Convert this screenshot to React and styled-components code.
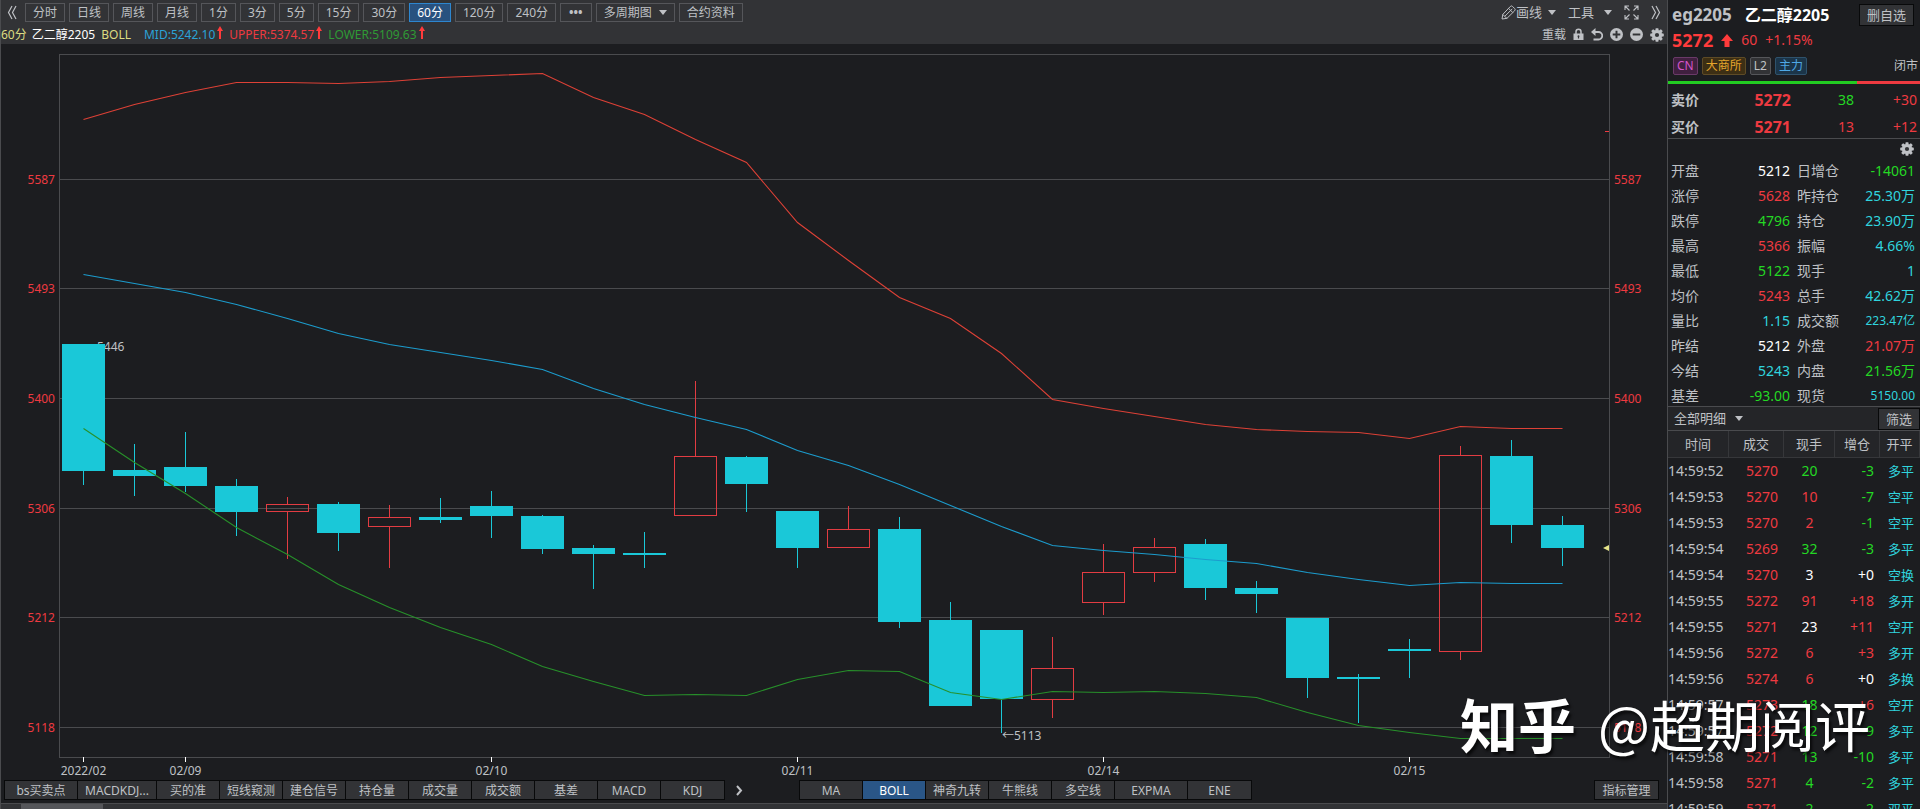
import React from 'react';
import styled, { createGlobalStyle } from 'styled-components';

const color = {
  bg: '#1c1d20',
  bar: '#323336',
  line: '#4a4b4e',
  text: '#bfc1c5',
  white: '#ffffff',
  red: '#ee3a40',
  green: '#24d824',
  cyan: '#30d4de',
  candle: '#1ac8d8',
};

const GlobalStyle = createGlobalStyle`
  * {
    box-sizing: border-box;
  }
  body {
    margin: 0;
    overflow: hidden;
    background: ${color.bg};
    color: ${color.text};
    font-family: 'Noto Sans', 'Noto Sans CJK SC', sans-serif;
    font-size: 14px;
  }
  button,
  select {
    font-family: inherit;
    color: inherit;
  }
`;

const Page = styled.div`
  position: relative;
  display: flex;
  height: 100vh;
  overflow: hidden;
`;

/* ---------- left side: chart ---------- */

const Main = styled.main`
  flex: 1;
  min-width: 0;
  display: flex;
  flex-direction: column;
  border-left: 1px solid ${color.line};
`;

const Toolbar = styled.header`
  background: ${color.bar};
  font-size: 12px;
  line-height: 17px;
`;

const PeriodRow = styled.div`
  display: flex;
  align-items: center;
  justify-content: space-between;
  height: 25px;
  padding: 0 6px;
`;

const InfoRow = styled.div`
  display: flex;
  align-items: center;
  justify-content: space-between;
  height: 19px;
  padding-right: 3px;
`;

const Group = styled.div`
  display: flex;
  align-items: center;
  gap: ${props => props.$gap || 4}px;
`;

const PeriodButton = styled.button`
  height: 19px;
  padding: 0 7px;
  border: 1px solid ${props => (props.$active ? '#2d86cf' : '#55565a')};
  background: ${props => (props.$active ? '#29527f' : 'transparent')};
  color: ${props => (props.$active ? color.white : color.text)};
  font-size: 12px;
  line-height: 17px;
  white-space: nowrap;
`;

const MoreButton = styled(PeriodButton)`
  padding: 0 8px;
  font-weight: 700;
`;

const SelectWrap = styled.label`
  display: flex;
  align-items: center;
  height: ${props => (props.$framed ? 19 : 22)}px;
  padding: 0 ${props => (props.$framed ? 7 : 5)}px;
  border: 1px solid ${props => (props.$framed ? '#55565a' : 'transparent')};
`;

const Select = styled.select`
  appearance: none;
  padding: 0;
  border: 0;
  outline: 0;
  background: transparent;
  font-size: ${props => props.$size || 12}px;
  line-height: 17px;
`;

const Caret = styled.span`
  width: 0;
  height: 0;
  margin-left: ${props => props.$gap || 8}px;
  border: 4px solid transparent;
  border-top: 5px solid ${color.text};
  border-bottom: 0;
`;

const IconButton = styled.button`
  display: flex;
  align-items: center;
  padding: 0;
  border: 0;
  background: none;
  font-size: ${props => props.$size || 12}px;
  line-height: 17px;
  white-space: nowrap;
`;

const Boll = styled.p`
  display: flex;
  margin: 0;
  white-space: pre;
`;

const Tint = styled.span`
  color: ${props => props.$color};
  margin-right: ${props => props.$gap || 0}px;
`;

const ChartSvg = styled.svg`
  display: block;
  flex: 1;
  min-height: 0;
  width: 100%;
  font-size: 12px;
`;

const TabBar = styled.footer`
  display: flex;
  align-items: center;
  height: 20px;
  margin-bottom: 3px;
  padding: 0 8px 0 3px;
`;

const Tabs = styled.div`
  display: flex;
  border: 1px solid #08090a;
`;

const Tab = styled.button`
  width: ${props => props.$width || 63}px;
  height: 18px;
  padding: 0;
  border: 0;
  border-right: 1px solid #08090a;
  background: ${props => (props.$active ? '#2a5687' : color.bar)};
  color: ${props => (props.$active ? color.white : color.text)};
  font-size: 12px;
  line-height: 17px;
  white-space: nowrap;
  &:last-child {
    border-right: 0;
  }
`;

const NextButton = styled(IconButton)`
  justify-content: center;
  width: 28px;
  margin-right: 46px;
`;

const Spacer = styled.div`
  flex: 1;
`;

const ScrollStrip = styled.div`
  height: 6px;
  padding-left: 20px;
  border-top: 1px solid ${color.line};
  background: ${color.bar};
`;

const Thumb = styled.div`
  width: 82px;
  height: 5px;
  background: #55565a;
`;

/* ---------- right side: quote panel ---------- */

const Aside = styled.aside`
  width: 253px;
  flex: none;
  border-left: 1px solid ${color.line};
  overflow: hidden;
  line-height: 20px;
`;

const TitleRow = styled.div`
  display: flex;
  align-items: center;
  height: 30px;
  padding: 0 6px 0 4px;
  font-weight: 700;
`;

const Code = styled.span`
  font-size: 17px;
  margin-right: 13px;
`;

const Name = styled.span`
  flex: 1;
  color: ${color.white};
  font-size: 16px;
`;

const PanelButton = styled.button`
  height: 22px;
  padding: 0 7px;
  border: 1px solid #08090a;
  background: ${color.bar};
  font-size: 13px;
  line-height: 18px;
`;

const PriceRow = styled.div`
  display: flex;
  align-items: center;
  gap: 8px;
  height: 20px;
  padding-left: 4px;
  color: ${color.red};
`;

const LastPrice = styled.strong`
  font-size: 18px;
  color: #ff3b3b;
`;

const TagRow = styled.div`
  display: flex;
  align-items: center;
  gap: 4px;
  height: 31px;
  padding: 0 2px 0 5px;
  font-size: 12px;
`;

const Tag = styled.span`
  height: 18px;
  padding: 0 3px;
  border: 1px solid ${props => props.$border};
  border-radius: 2px;
  background: ${props => props.$bg};
  color: ${props => props.$color};
  line-height: 16px;
`;

const Status = styled.span`
  margin-left: auto;
`;

const Ratio = styled.div`
  height: 3px;
  background: linear-gradient(to right, #22cc22 75%, ${color.red} 75%);
`;

const Offers = styled.div`
  display: grid;
  grid-template-columns: 50px 70px 63px 1fr;
  grid-auto-rows: 22px;
  row-gap: 5px;
  padding: 5px 3px 0 3px;
  border-bottom: 1px solid ${color.line};
  text-align: right;
  line-height: 22px;
`;

const OfferLabel = styled.strong`
  text-align: left;
`;

const OfferPrice = styled.strong`
  color: ${color.red};
  font-size: 16px;
`;

const GearRow = styled.div`
  display: flex;
  justify-content: flex-end;
  align-items: center;
  height: 20px;
  padding-right: 6px;
`;

const Stats = styled.dl`
  display: grid;
  grid-template-columns: 119px 1fr;
  column-gap: 7px;
  row-gap: 5px;
  margin: 0;
  padding: 2px 5px 0 3px;
  border-bottom: 1px solid ${color.line};
`;

const Stat = styled.div`
  display: flex;
  justify-content: space-between;
  height: 20px;
`;

const StatValue = styled.dd`
  margin: 0;
  color: ${props => props.$color};
  font-size: ${props => (props.$small ? 12 : 14)}px;
`;

const FilterRow = styled.div`
  display: flex;
  align-items: center;
  justify-content: space-between;
  height: 24px;
  border-bottom: 1px solid ${color.line};
  background: #242528;
`;

const Ticks = styled.table`
  width: 100%;
  table-layout: fixed;
  border-collapse: separate;
  border-spacing: 0;
`;

const Th = styled.th`
  width: ${props => props.$width}px;
  height: 27px;
  padding: 0;
  border-right: 1px solid #36373a;
  border-bottom: 1px solid #36373a;
  background: #242528;
  font-size: 13px;
  font-weight: 400;
`;

const Td = styled.td`
  height: 26px;
  padding: 0 ${props => props.$pad || 0}px 0 0;
  color: ${props => props.$color || color.text};
  text-align: ${props => props.$align || 'right'};
  font-size: ${props => props.$size || 14}px;
  white-space: nowrap;
`;

const Watermark = styled.div`
  position: absolute;
  right: 50px;
  bottom: 46px;
  display: flex;
  align-items: center;
  gap: 22px;
  color: ${color.white};
  font-family: 'Noto Sans CJK SC', sans-serif;
  font-size: 55px;
  line-height: 80px;
  text-shadow: 2px 3px 3px rgba(0, 0, 0, 0.7);
  pointer-events: none;
`;

const Brand = styled.span`
  font-size: 58px;
  font-weight: 700;
`;

/* ---------- icons ---------- */

const Gear = () => (
  <svg width="14" height="14" viewBox="-7 -7 14 14" fill={color.text}>
    {[0, 45, 90, 135].map(a => (
      <path key={a} d="M-1.3 -6.8h2.6l.6 3v7.6l-.6 3h-2.6l-.6 -3v-7.6z" transform={`rotate(${a})`} />
    ))}
    <circle r="4.8" />
    <circle r="2.1" fill={color.bar} />
  </svg>
);

const DoubleAngle = ({ flip }) => (
  <svg width="10" height="15" viewBox="0 0 10 15" fill="none" stroke={color.text} strokeWidth="1.2">
    <path d={flip ? 'M1 1l3.5 6.5L1 14M5 1l3.5 6.5L5 14' : 'M5 1L1.5 7.5L5 14M9 1L5.5 7.5L9 14'} />
  </svg>
);

const Pencil = () => (
  <svg width="15" height="15" viewBox="0 0 15 15" fill="none" stroke={color.text} strokeWidth="1">
    <path d="M1 14l.8-4.600L9.300 1.500a1.600 1.600 0 0 1 2.300 0l2 2a1.600 1.600 0 0 1 0 2.300L6 13.300z" />
    <path d="M1.800 9.400l4 4M3.800 11.300L11.300 3.800M7.500 3.300l4.300 4.300" />
  </svg>
);

const Expand = () => (
  <svg width="15" height="15" viewBox="0 0 15 15" fill="none" stroke={color.text} strokeWidth="1.1">
    <path d="M1 5V1h4M1 1l4.500 4.500M10 1h4v4M14 1L9.500 5.500M1 10v4h4M1 14l4.500-4.500M14 10v4h-4M14 14L9.500 9.500" />
  </svg>
);

const Lock = () => (
  <svg width="11" height="13" viewBox="0 0 11 13">
    <path d="M3 6V3.800a2.500 2.500 0 0 1 5 0V6" fill="none" stroke={color.text} strokeWidth="1.500" />
    <path d="M.5 5.500h10v6.500H.5V5.500zM5.500 7.300a1 1 0 0 0-.6 1.800v1.400h1.200V9.100a1 1 0 0 0-.6-1.800z" fill={color.text} fillRule="evenodd" />
  </svg>
);

const Undo = () => (
  <svg width="12" height="13" viewBox="0 0 12 13">
    <path d="M2 4h5.500a3.500 3.500 0 0 1 0 7.500H2.500" fill="none" stroke={color.text} strokeWidth="1.800" />
    <path d="M0 4L4.500 0v8z" fill={color.text} />
  </svg>
);

const Zoom = ({ plus }) => (
  <svg width="13" height="13" viewBox="0 0 12 12">
    <circle cx="6" cy="6" r="6" fill={color.text} />
    <path d={plus ? 'M2.500 6h7M6 2.500v7' : 'M2.500 6h7'} stroke={color.bar} strokeWidth="1.800" />
  </svg>
);

const UpArrow = ({ width, height }) => (
  <svg width={width} height={height} viewBox="0 0 12 12" preserveAspectRatio="none" fill="#ff3b3b">
    <path d="M6 0l6 6.500H8.500V12h-5V6.500H0z" />
  </svg>
);

const SmallArrow = () => (
  <svg width="6" height="13" viewBox="0 0 6 13" fill="#ff3b3b">
    <path d="M3 0l3 5H4v8H2V5H0z" />
  </svg>
);

const Next = () => (
  <svg width="7" height="11" viewBox="0 0 7 11" fill="none" stroke={color.text} strokeWidth="2">
    <path d="M1 1l4 4.500L1 10" />
  </svg>
);

/* ---------- chart data ---------- */

const STEP = 51;
const FIRST = 83.5;

const gridLines = [
  [5587, 179],
  [5493, 288],
  [5400, 398],
  [5306, 508],
  [5212, 617],
  [5118, 727],
];

const dates = [
  [0, '2022/02'],
  [2, '02/09'],
  [8, '02/10'],
  [14, '02/11'],
  [20, '02/14'],
  [26, '02/15'],
];

// [high, body top, body bottom, low, rising]
const candles = [
  [344, 344, 471, 485],
  [444, 470, 476, 496],
  [432, 467, 486, 492],
  [479, 486, 512, 536],
  [497, 504, 511, 559, true],
  [502, 504, 533, 551],
  [505, 517, 526, 568, true],
  [498, 517, 520, 523],
  [491, 506, 516, 538],
  [515, 516, 549, 554],
  [545, 548, 554, 589],
  [532, 553, 555, 568],
  [381, 456, 515, 515, true],
  [456, 457, 484, 512],
  [511, 511, 548, 568],
  [506, 529, 547, 547, true],
  [517, 529, 622, 628],
  [602, 620, 706, 706],
  [630, 630, 699, 733],
  [637, 668, 699, 718, true],
  [544, 572, 602, 615, true],
  [538, 547, 572, 582, true],
  [539, 544, 588, 600],
  [581, 588, 594, 613],
  [618, 618, 678, 698],
  [674, 677, 679, 723],
  [639, 649, 651, 678],
  [446, 455, 651, 660, true],
  [440, 456, 525, 543],
  [516, 525, 548, 566],
];

const bands = [
  {
    stroke: '#dd4136',
    ys: [119, 104, 92, 82, 82, 83, 81, 77, 75, 73, 97, 114, 139, 162, 222, 260, 297, 318, 353, 399, 408, 416, 424, 429, 431, 432, 438, 426, 428, 428],
  },
  {
    stroke: '#1c9ccd',
    ys: [274, 283, 292, 304, 318, 333, 344, 352, 360, 369, 388, 404, 417, 429, 450, 465, 484, 505, 526, 545, 550, 554, 559, 563, 572, 579, 585, 582, 583, 583],
  },
  {
    stroke: '#27902a',
    ys: [428, 462, 493, 527, 554, 584, 607, 627, 644, 666, 681, 695, 694, 695, 679, 670, 671, 692, 699, 691, 692, 691, 693, 697, 712, 725, 732, 738, 738, 738],
  },
];

const Candle = ({ index, data }) => {
  const [high, top, bottom, low, rising] = data;
  const x = FIRST + index * STEP;
  if (rising) {
    return (
      <g stroke="#e23c42" fill="none">
        <path d={`M${x} ${high}V${top}M${x} ${bottom}V${low}`} />
        <rect x={x - 21} y={top + 0.5} width="42" height={bottom - top} />
      </g>
    );
  }
  return (
    <g fill={color.candle}>
      <rect x={x - 0.5} y={high} width="1" height={low - high} />
      <rect x={x - 21.5} y={top} width="43" height={bottom - top} />
    </g>
  );
};

const Chart = () => (
  <ChartSvg viewBox="1 44 1666 736" role="img" aria-label="BOLL">
    <g stroke={color.line} fill="none" shapeRendering="crispEdges">
      <rect x="59.5" y="54.5" width="1550" height="703" />
      {gridLines.map(([label, y]) => (
        <path key={label} d={`M60 ${y + 0.5}H1609`} />
      ))}
    </g>
    <g fill={color.red}>
      {gridLines.map(([label, y]) => (
        <React.Fragment key={label}>
          <text x="55" y={y + 5} textAnchor="end">{label}</text>
          <text x="1614" y={y + 5}>{label}</text>
        </React.Fragment>
      ))}
    </g>
    <g fill={color.text}>
      <text x="97" y="351">5446</text>
      <text x="1002" y="740">←5113</text>
      {dates.map(([index, label]) => (
        <text key={label} x={FIRST + index * STEP} y="775" textAnchor="middle">{label}</text>
      ))}
    </g>
    <g stroke={color.white}>
      {dates.map(([index, label]) => (
        <path key={label} d={`M${FIRST + index * STEP} 757v5`} />
      ))}
    </g>
    <g shapeRendering="crispEdges">
      {candles.map((data, index) => (
        <Candle key={index} index={index} data={data} />
      ))}
    </g>
    {bands.map(({ stroke, ys }) => (
      <polyline
        key={stroke}
        fill="none"
        stroke={stroke}
        strokeWidth="1.1"
        points={ys.map((y, i) => `${FIRST + i * STEP},${y + 0.5}`).join(' ')}
      />
    ))}
    <path d="M1605 131.500h4" stroke={color.red} />
    <path d="M1603 548l6-3v6z" fill="#e6e58a" />
  </ChartSvg>
);

/* ---------- panel data ---------- */

const periods = ['分时', '日线', '周线', '月线', '1分', '3分', '5分', '15分', '30分', '60分', '120分', '240分'];

const signalTabs = [
  ['bs买卖点', 73],
  ['MACDKDJ...', 79],
  ['买的准'],
  ['短线窥测'],
  ['建仓信号'],
  ['持仓量'],
  ['成交量'],
  ['成交额'],
  ['基差'],
  ['MACD'],
  ['KDJ'],
];

const mainTabs = [['MA', 63], ['BOLL', 63], ['神奇九转', 63], ['牛熊线', 63], ['多空线', 63], ['EXPMA', 73], ['ENE', 63]];

const { red, green, cyan, white } = color;

const stats = [
  ['开盘', '5212', white],
  ['日增仓', '-14061', green],
  ['涨停', '5628', red],
  ['昨持仓', '25.30万', cyan],
  ['跌停', '4796', green],
  ['持仓', '23.90万', cyan],
  ['最高', '5366', red],
  ['振幅', '4.66%', cyan],
  ['最低', '5122', green],
  ['现手', '1', cyan],
  ['均价', '5243', red],
  ['总手', '42.62万', cyan],
  ['量比', '1.15', cyan],
  ['成交额', '223.47亿', cyan, true],
  ['昨结', '5212', white],
  ['外盘', '21.07万', red],
  ['今结', '5243', cyan],
  ['内盘', '21.56万', green],
  ['基差', '-93.00', green],
  ['现货', '5150.00', cyan, true],
];

const ticks = [
  ['14:59:52', '5270', '20', green, '-3', '多平'],
  ['14:59:53', '5270', '10', red, '-7', '空平'],
  ['14:59:53', '5270', '2', red, '-1', '空平'],
  ['14:59:54', '5269', '32', green, '-3', '多平'],
  ['14:59:54', '5270', '3', white, '+0', '空换'],
  ['14:59:55', '5272', '91', red, '+18', '多开'],
  ['14:59:55', '5271', '23', white, '+11', '空开'],
  ['14:59:56', '5272', '6', red, '+3', '多开'],
  ['14:59:56', '5274', '6', red, '+0', '多换'],
  ['14:59:57', '5273', '18', green, '+6', '空开'],
  ['14:59:57', '5272', '12', green, '-9', '多平'],
  ['14:59:58', '5271', '13', green, '-10', '多平'],
  ['14:59:58', '5271', '4', green, '-2', '多平'],
  ['14:59:59', '5271', '2', green, '-2', '双平'],
];

const changeColor = change => {
  if (change === '+0') return white;
  return change[0] === '+' ? red : green;
};

const ChartPane = () => (
  <Main>
    <Toolbar>
      <PeriodRow>
        <Group>
          <IconButton aria-label="left"><DoubleAngle /></IconButton>
          <Spacer />
          {periods.map(label => (
            <PeriodButton key={label} $active={label === '60分'}>{label}</PeriodButton>
          ))}
          <MoreButton>•••</MoreButton>
          <SelectWrap $framed>
            <Select aria-label="多周期图"><option>多周期图</option></Select>
            <Caret $gap={6} />
          </SelectWrap>
          <PeriodButton>合约资料</PeriodButton>
        </Group>
        <Group $gap={12}>
          <IconButton $size={13}><Pencil />画线<Caret $gap={6} /></IconButton>
          <IconButton $size={13}>工具<Caret $gap={10} /></IconButton>
          <IconButton aria-label="fullscreen"><Expand /></IconButton>
          <IconButton aria-label="right"><DoubleAngle flip /></IconButton>
        </Group>
      </PeriodRow>
      <InfoRow>
        <Boll>
          <Tint $color="#dcdc82" $gap={5}>60分</Tint>
          <Tint $color={white} $gap={6}>乙二醇2205</Tint>
          <Tint $color="#dcdc82" $gap={13}>BOLL</Tint>
          <Tint $color="#2ba3d6" $gap={2}>MID:5242.10</Tint>
          <Tint $gap={6}><SmallArrow /></Tint>
          <Tint $color={red} $gap={2}>UPPER:5374.57</Tint>
          <Tint $gap={6}><SmallArrow /></Tint>
          <Tint $color="#2f9a35" $gap={2}>LOWER:5109.63</Tint>
          <Tint><SmallArrow /></Tint>
        </Boll>
        <Group $gap={7}>
          <IconButton>重载</IconButton>
          <IconButton aria-label="lock"><Lock /></IconButton>
          <IconButton aria-label="undo"><Undo /></IconButton>
          <IconButton aria-label="zoom in"><Zoom plus /></IconButton>
          <IconButton aria-label="zoom out"><Zoom /></IconButton>
          <IconButton aria-label="settings"><Gear /></IconButton>
        </Group>
      </InfoRow>
    </Toolbar>
    <Chart />
    <TabBar>
      <Tabs>
        {signalTabs.map(([label, width]) => (
          <Tab key={label} $width={width}>{label}</Tab>
        ))}
      </Tabs>
      <NextButton aria-label="next"><Next /></NextButton>
      <Tabs>
        {mainTabs.map(([label, width]) => (
          <Tab key={label} $width={width} $active={label === 'BOLL'}>{label}</Tab>
        ))}
      </Tabs>
      <Spacer />
      <Tabs>
        <Tab>指标管理</Tab>
      </Tabs>
    </TabBar>
    <ScrollStrip>
      <Thumb />
    </ScrollStrip>
  </Main>
);

const QuotePane = () => (
  <Aside>
    <TitleRow>
      <Code>eg2205</Code>
      <Name>乙二醇2205</Name>
      <PanelButton>删自选</PanelButton>
    </TitleRow>
    <PriceRow>
      <LastPrice>5272</LastPrice>
      <UpArrow width="12" height="13" />
      <span>60</span>
      <span>+1.15%</span>
    </PriceRow>
    <TagRow>
      <Tag $color="#d355c8" $bg="#40203f" $border="#6a3a68">CN</Tag>
      <Tag $color="#e5a52c" $bg="#3d2f14" $border="#5e4b26">大商所</Tag>
      <Tag $color={color.text} $bg="#323336" $border="#55565a">L2</Tag>
      <Tag $color="#4fa9e6" $bg="#1b3549" $border="#2f526c">主力</Tag>
      <Status>闭市</Status>
    </TagRow>
    <Ratio />
    <Offers>
      <OfferLabel>卖价</OfferLabel>
      <OfferPrice>5272</OfferPrice>
      <Tint $color={green}>38</Tint>
      <Tint $color={red}>+30</Tint>
      <OfferLabel>买价</OfferLabel>
      <OfferPrice>5271</OfferPrice>
      <Tint $color={red}>13</Tint>
      <Tint $color={red}>+12</Tint>
    </Offers>
    <GearRow>
      <IconButton aria-label="settings"><Gear /></IconButton>
    </GearRow>
    <Stats>
      {stats.map(([label, value, tint, small]) => (
        <Stat key={label + value}>
          <dt>{label}</dt>
          <StatValue $color={tint} $small={small}>{value}</StatValue>
        </Stat>
      ))}
    </Stats>
    <FilterRow>
      <SelectWrap>
        <Select $size={13} aria-label="全部明细"><option>全部明细</option></Select>
        <Caret />
      </SelectWrap>
      <PanelButton>筛选</PanelButton>
    </FilterRow>
    <Ticks>
      <thead>
        <tr>
          <Th $width={61}>时间</Th>
          <Th $width={55}>成交</Th>
          <Th $width={51}>现手</Th>
          <Th $width={45}>增仓</Th>
          <Th $width={40}>开平</Th>
        </tr>
      </thead>
      <tbody>
        {ticks.map(([time, price, lots, lotsColor, change, kind], i) => (
          <tr key={i}>
            <Td $align="left">{time}</Td>
            <Td $color={red} $pad={6}>{price}</Td>
            <Td $color={lotsColor} $align="center">{lots}</Td>
            <Td $color={changeColor(change)} $pad={6}>{change}</Td>
            <Td $color={cyan} $pad={6} $size={13}>{kind}</Td>
          </tr>
        ))}
      </tbody>
    </Ticks>
  </Aside>
);

export default () => (
  <Page>
    <GlobalStyle />
    <ChartPane />
    <QuotePane />
    <Watermark>
      <Brand>知乎</Brand>
      <span>@超期阅评</span>
    </Watermark>
  </Page>
);
